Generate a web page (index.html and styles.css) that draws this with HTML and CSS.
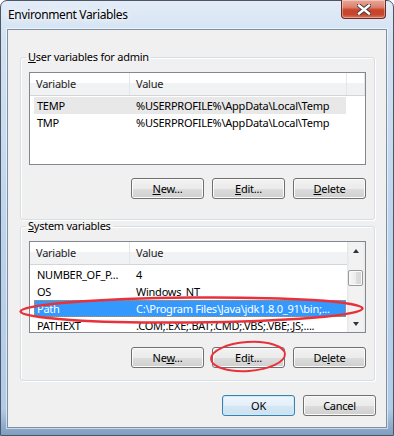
FILE: index.html
```html
<!DOCTYPE html>
<html lang="en">
<head>
  <meta charset="UTF-8">
  <title>Environment Variables</title>
  <link rel="stylesheet" href="styles.css">
</head>
<body>
  <div class="window">
    <div class="titlebar">
      <span class="title">Environment Variables</span>
      <button class="close-btn" aria-label="Close">
        <svg width="14" height="11" viewBox="0 0 14 11">
          <path d="M2 1.5 L12 9.5 M12 1.5 L2 9.5" stroke="#3a3a3a" stroke-width="4.2" stroke-linecap="square"/>
          <path d="M2 1.5 L12 9.5 M12 1.5 L2 9.5" stroke="#fff" stroke-width="2.4" stroke-linecap="square"/>
        </svg>
      </button>
    </div>

    <div class="client">
      <fieldset class="group group-user">
        <legend><u>U</u>ser variables for admin</legend>
        <div class="listview list-user">
          <div class="lv-main">
            <div class="lv-header cols-3">
              <span>Variable</span><span>Value</span><span></span>
            </div>
            <div class="lv-rows">
              <div class="lv-row dim"><span>TEMP</span><span>%USERPROFILE%\AppData\Local\Temp</span></div>
              <div class="lv-row"><span>TMP</span><span>%USERPROFILE%\AppData\Local\Temp</span></div>
            </div>
          </div>
        </div>
        <div class="btn-row">
          <button class="btn"><u>N</u>ew...</button>
          <button class="btn"><u>E</u>dit...</button>
          <button class="btn"><u>D</u>elete</button>
        </div>
      </fieldset>

      <fieldset class="group group-system">
        <legend><u>S</u>ystem variables</legend>
        <div class="listview list-system">
          <div class="lv-main">
            <div class="lv-header cols-2">
              <span>Variable</span><span>Value</span>
            </div>
            <div class="lv-rows">
              <div class="lv-row"><span>NUMBER_OF_P...</span><span>4</span></div>
              <div class="lv-row"><span>OS</span><span>Windows_NT</span></div>
              <div class="lv-row active"><span>Path</span><span>C:\Program Files\Java\jdk1.8.0_91\bin;...</span></div>
              <div class="lv-row"><span>PATHEXT</span><span>.COM;.EXE;.BAT;.CMD;.VBS;.VBE;.JS;....</span></div>
            </div>
          </div>
          <div class="scrollbar">
            <div class="sb-arrow"><span class="tri up"></span></div>
            <div class="sb-track"><div class="sb-thumb"></div></div>
            <div class="sb-arrow"><span class="tri down"></span></div>
          </div>
        </div>
        <div class="btn-row">
          <button class="btn">Ne<u>w</u>...</button>
          <button class="btn">Ed<u>i</u>t...</button>
          <button class="btn">De<u>l</u>ete</button>
        </div>
      </fieldset>

      <div class="footer">
        <button class="btn btn-default">OK</button>
        <button class="btn">Cancel</button>
      </div>
    </div>

    <!-- red marks drawn over the screenshot -->
    <svg class="marks" width="394" height="436" viewBox="0 0 394 436">
      <ellipse cx="191.5" cy="310" rx="171" ry="12.5" transform="rotate(-0.5 191.5 310)" fill="none" stroke="#e8313a" stroke-width="2.5"/>
      <ellipse cx="248" cy="356.5" rx="37" ry="14.5" transform="rotate(-4 248 356.5)" fill="none" stroke="#e8313a" stroke-width="2"/>
    </svg>
  </div>
</body>
</html>
```

FILE: styles.css
```css
* { box-sizing: border-box; }
body { margin: 0; font-family: "Segoe UI", "Noto Sans", sans-serif; font-size: 11px; letter-spacing: -0.25px; color: #000; background: #fff; }

.window { position: relative; width: 394px; height: 436px; display: flex; flex-direction: column; border: 1px solid #4a5766; border-radius: 7px 7px 0 0; background: linear-gradient(180deg, #e3ecf7 0, #d3e2f2 8%, #bcd3ec 55%, #b2cbe7 94%, #7f9dbf 100%); }

.titlebar { height: 28px; display: flex; align-items: flex-start; }
.title { font-size: 12px; line-height: 28px; padding-left: 7px; letter-spacing: -0.35px; text-shadow: 0 0 6px #fff, 0 0 10px #fff; }
.close-btn { margin-left: auto; margin-right: 7px; margin-top: -1px; width: 45px; height: 19px; padding: 0; border: 1px solid #6b2a24; border-top: none; border-radius: 0 0 4px 4px; display: flex; align-items: center; justify-content: center; background: linear-gradient(180deg, #e9a898 0, #dc826d 40%, #c9442c 55%, #c8452d 80%, #d8785b 100%); box-shadow: inset 0 0 0 1px rgba(255,255,255,0.35); }

.client { flex: 1; margin: 0 6px 7px 6px; border: 1px solid #7d8fa3; background: #f0f0f0; box-shadow: 0 0 0 1px rgba(255,255,255,0.55); display: flex; flex-direction: column; }

.group { margin: 0 11px 0 12px; padding: 0 8px; border: 1px solid #d5dfe5; border-radius: 3px; box-shadow: inset 1px 1px 0 #fff, 1px 1px 0 #fff; min-width: 0; }
.group legend { padding: 0 2px; margin-left: -3px; line-height: 14px; }
.group-user { margin-top: 20px; padding-bottom: 20px; }
.group-system { margin-top: -1px; padding-bottom: 12px; }

.listview { margin-top: 8px; border: 1px solid #828790; background: #fff; display: flex; overflow: hidden; }
.list-user { height: 93px; }
.list-system { height: 92px; }
.lv-main { flex: 1; min-width: 0; }

.lv-header { display: grid; height: 23px; border-bottom: 1px solid #d5d5d5; background: linear-gradient(180deg, #fff 0, #fff 45%, #f1f2f4 45%, #f1f2f4 100%); }
.cols-3 { grid-template-columns: 100px 217px 1fr; }
.cols-2 { grid-template-columns: 100px 1fr; }
.lv-header span { line-height: 22px; padding-left: 6px; border-right: 1px solid #e3e6ea; color: #1c1c1c; }
.cols-2 span:last-child { border-right: none; }

.lv-rows { margin-top: 1px; }
.lv-row { display: grid; grid-template-columns: 96px 216px; width: 312px; height: 17px; margin-left: 4px; line-height: 17px; white-space: nowrap; }
.lv-row span { overflow: hidden; padding-left: 3px; }
.lv-row span + span { padding-left: 6px; }
.lv-row.dim { background: #e8e8e8; }
.lv-row.active { background: #3399ff; color: #fff; outline: 1px dotted #d98a2b; outline-offset: -1px; }

.scrollbar { width: 18px; display: flex; flex-direction: column; background: linear-gradient(90deg, #e6e6e6 0, #f2f2f2 15%, #f2f2f2 85%, #e9e9e9 100%); }
.sb-arrow { height: 17px; display: flex; align-items: center; justify-content: center; }
.tri { width: 0; height: 0; border-left: 3.5px solid transparent; border-right: 3.5px solid transparent; }
.tri.up { border-bottom: 4px solid #333; }
.tri.down { border-top: 4px solid #333; }
.sb-track { flex: 1; }
.sb-thumb { width: 15px; height: 16px; margin: 11px 0 0 1px; border: 1px solid #999; border-radius: 2px; background: linear-gradient(90deg, #f7f7f7 0, #ececec 50%, #dedede 50%, #d6d6d6 100%); box-shadow: inset 0 0 0 1px #fafafa; }

.btn-row { display: flex; justify-content: flex-end; gap: 8px; }
.group-user .btn-row { margin-top: 13px; }
.group-system .btn-row { margin-top: 14px; }

.btn { width: 73px; height: 21px; padding: 0; font-family: inherit; font-size: 11px; letter-spacing: -0.25px; color: #000; border: 1px solid #707070; border-radius: 3px; background: linear-gradient(180deg, #f2f2f2 0, #ebebeb 50%, #dddddd 50%, #cfcfcf 100%); box-shadow: inset 0 0 0 1px #fbfbfb; }
.btn-default { border-color: #3c7fb1; background: linear-gradient(180deg, #eef6fb 0, #e4eff8 50%, #d6e7f4 50%, #cde1f0 100%); box-shadow: inset 0 0 0 1px #c8ecfb; }

.footer { display: flex; justify-content: flex-end; gap: 8px; margin-top: 14px; padding-right: 10px; }

.marks { position: absolute; left: -1px; top: -1px; pointer-events: none; }
```
